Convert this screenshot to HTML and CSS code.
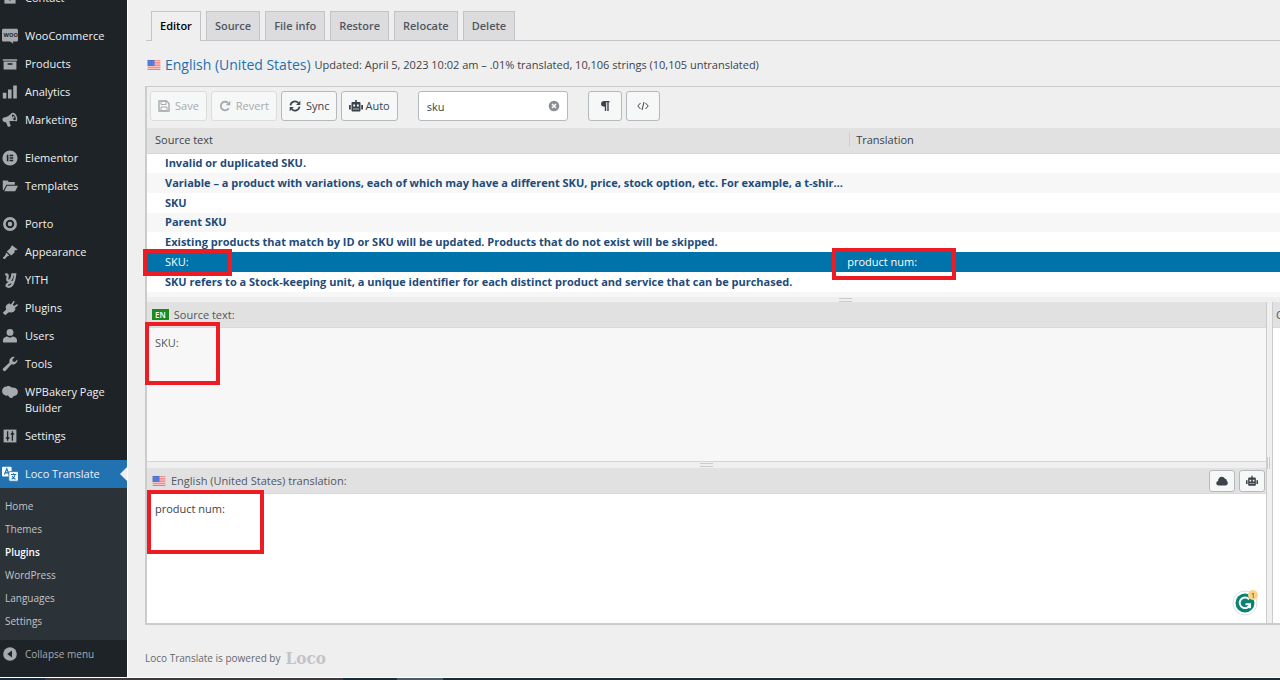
FILE: index.html
```html
<!DOCTYPE html>
<html lang="en">
  <head>
    <meta charset="UTF-8" />
    <meta name="viewport" content="width=device-width, initial-scale=1.0" />
    <title>Loco Translate - Editor</title>
    <link rel="stylesheet" href="styles.css">
  </head>
  <body>
    <svg class="sprite" aria-hidden="true">
      <symbol id="flag-us" viewBox="0 0 14 11">
        <rect width="14" height="11" fill="#f6dcdc" />
        <path d="M0 .8h14M0 3.2h14M0 5.6h14M0 8h14M0 10.3h14" stroke="#ee7a74" stroke-width="1.2" />
        <rect width="7.5" height="6.4" fill="#3f6fd0" />
        <path d="M1 2h6M1 4.4h6" stroke="#b9cdf5" stroke-width=".7" stroke-dasharray="1 .8" />
      </symbol>
      <symbol id="robot" viewBox="0 0 14 12">
        <path d="M6.2 0h1.6v2h2.4c.8 0 1.3.5 1.3 1.3v7c0 .8-.5 1.3-1.3 1.3H3.8c-.8 0-1.3-.5-1.3-1.3v-7C2.5 2.5 3 2 3.8 2h2.400zM0 5h1.800v4.500H0zM12.200 5H14v4.500h-1.800z" />
        <path d="M4.200 4.600h1.900v1.900H4.200zM7.900 4.600h1.900v1.900H7.900zM4.200 8.600h1.400v1H4.200zM6.300 8.600h1.400v1H6.300zM8.400 8.600h1.400v1H8.400z" fill="#f6f7f7" />
      </symbol>
    </svg>

    <div class="layout">
      <nav class="admin-menu">
        <ul class="menu">
          <li><a href="#"><svg viewBox="0 0 20 20"><path d="M3 6h14v11H3z" /><path d="M9 8h2v5H9z" fill="#1d2327" /></svg>Contact</a></li>
          <li class="group"><a href="#"><svg viewBox="0 0 20 20"><path d="M2 1h16c1.200 0 2 .8 2 2v12c0 1.200-.8 2-2 2h-4.500l.8 2.800L10 17H2c-1.200 0-2-.8-2-2V3c0-1.200.8-2 2-2z" /><text class="woo" x="2" y="11.500">WOO</text></svg>WooCommerce</a></li>
          <li><a href="#"><svg viewBox="0 0 20 20"><path d="M1 4h18v2H1zM2 7h16v10H2z" /><path d="M7 9h6v2H7z" fill="#1d2327" /></svg>Products</a></li>
          <li><a href="#"><svg viewBox="0 0 20 20"><path d="M1 11h4.500v7H1zM7.500 7H12v11H7.500zM14 2h4.500v16H14z" /></svg>Analytics</a></li>
          <li><a href="#"><svg viewBox="0 0 20 20"><path d="M.5 9.500c0-1.300.8-2.200 2-2.500 4-1 7-3 9.500-5.500 2-1.300 4.500 0 6 3s1.500 6.500 0 7.500c-3-.8-6-.8-9-.1l2 5.600-3.500 1.300L5 12.700c-2.500.5-4.500-1.200-4.500-3.200z" /><path d="M13 3.200c1-.5 2.700.9 3.600 2.800s.9 3.800-.1 4.200-2.500-.9-3.300-2.800-1.200-3.800-.2-4.200z" fill="#1d2327" /><circle cx="14.300" cy="6.800" r="1.400" /></svg>Marketing</a></li>
          <li class="group"><a href="#"><svg viewBox="0 0 20 20"><circle cx="10" cy="10" r="9.500" /><path d="M6 6h2v8H6zM9.500 6H14v1.700H9.500zM9.500 9.200H14v1.700H9.500zM9.500 12.300H14V14H9.500z" fill="#1d2327" /></svg>Elementor</a></li>
          <li><a href="#"><svg viewBox="0 0 20 20"><path d="M1 3h6l1.500 2H16v3.500H5.500L2 15H1z" /><path d="M6.200 9.700H20L16.500 16.500H2.800z" /></svg>Templates</a></li>
          <li class="group"><a href="#"><svg viewBox="0 0 20 20"><circle cx="10" cy="10" r="7" fill="none" stroke="#a7aaad" stroke-width="3.400" /><circle cx="10" cy="10" r="2.800" /></svg>Porto</a></li>
          <li><a href="#"><svg viewBox="0 0 20 20"><path d="M12.500 1.500l7 5.500-1.500.8-2-.3-.5 3.500-4 3.500L6 9.500l4-4z" /><path d="M5.200 10.500l4 4-1.400.6c-1.500.5-2.500 1.400-3.800 3.400-1.200 1.200-3.500-.8-2.300-2.200C4 15 4.500 13 5.200 10.500z" /></svg>Appearance</a></li>
          <li><a href="#"><svg viewBox="0 0 20 20"><path d="M4 3.500c2.500-1.500 3.500 0 3 2.500-.8 4-.5 5 1.200 5 2.500 0 4.300-4 4.800-8h3.500c-.8 7-2.500 15.500-8 15.500-4.500 0-4.500-4 5.500-6.500" fill="none" stroke="#a7aaad" stroke-width="2.800" /></svg>YITH</a></li>
          <li><a href="#"><svg viewBox="0 0 20 20"><path d="M13 3l1.500-2 1.500 1-2.500 4 1.500 1.500 4-2.500 1 1.500-4 3.500 1 1.500-2 3c-2 1.500-4.500 1.500-6 .5L4 19l-3-3 4.500-4.500C4 9.500 4.500 7.500 6 6l3-2 2 1.500z" /></svg>Plugins</a></li>
          <li><a href="#"><svg viewBox="0 0 20 20"><circle cx="10" cy="5.500" r="4.300" /><path d="M1.500 18c-1-4 .5-7 5-7.500l3.500 1.800 3.500-1.800c4.500.5 6 3.500 5 7.500z" /></svg>Users</a></li>
          <li><a href="#"><svg viewBox="0 0 20 20"><path d="M17.500 9c-1.500 1.600-3.900 2-5.700 1.300l-7.300 8.200c-1.700 1.600-4.700-.9-3.200-3l8.200-7.300C8.800 6.300 9.300 4 11 2.500c1.500-1.500 3.500-1.800 5-1.200L13 4.500l.5 2.300 2.500.7 3.300-3.200c.4 1.500-.3 3.300-1.800 4.700z" /></svg>Tools</a></li>
          <li><a href="#"><svg viewBox="0 0 20 20"><path d="M6 3c2.500-1 4.500 0 6 1.500 3-.8 5.500.5 7 2.500 1.500 2.500 1 6-2 7.500-1.500.8-2.500.6-3 1.500-.8 1.500-3 2-4.500 1-.8-.6-1-2-2-2.500C4 15 1.500 13.500.5 11-.8 7 1.500 3 6 3z" /></svg>WPBakery Page Builder</a></li>
          <li><a href="#"><svg viewBox="0 0 20 20"><path d="M2 2h16v16H2z" /><path d="M7 4v12M13 4v12M4.800 12.500h4.500M10.800 7.500h4.500" stroke="#1d2327" stroke-width="1.700" /></svg>Settings</a></li>
          <li class="group current"><a href="#"><svg viewBox="0 0 20 20"><rect x="0" y="1" width="12" height="12" rx="1.500" /><path d="M3 10.500L6 3.500l3 7M4 8.500h4" fill="none" stroke="#2271b1" stroke-width="1.500" /><rect x="8.500" y="7" width="12" height="12" rx="1.500" stroke="#2271b1" /><path d="M11 10.500h7M14.500 9v1.500M12 16.500c2-1 4-3 4.300-5.500M12.500 12.500c1 2 2.500 3.500 4.500 4" fill="none" stroke="#2271b1" stroke-width="1.300" /></svg>Loco Translate</a></li>
        </ul>
        <ul class="submenu">
          <li><a href="#">Home</a></li>
          <li><a href="#">Themes</a></li>
          <li><a href="#" class="active">Plugins</a></li>
          <li><a href="#">WordPress</a></li>
          <li><a href="#">Languages</a></li>
          <li><a href="#">Settings</a></li>
        </ul>
        <button type="button" class="collapse"><svg viewBox="0 0 20 20"><circle cx="10" cy="10" r="8.500" /><path d="M12.500 5.500v9L6.500 10z" fill="#1d2327" /></svg>Collapse menu</button>
      </nav>

      <main class="content">
        <nav class="tabs">
          <a href="#" class="tab active">Editor</a>
          <a href="#" class="tab">Source</a>
          <a href="#" class="tab">File info</a>
          <a href="#" class="tab">Restore</a>
          <a href="#" class="tab">Relocate</a>
          <a href="#" class="tab">Delete</a>
        </nav>

        <div class="file-info">
          <svg class="flag"><use href="#flag-us" /></svg>
          <h1><a href="#">English (United States)</a></h1>
          <span>Updated: April 5, 2023 10:02 am – .01% translated, 10,106 strings (10,105 untranslated)</span>
        </div>

        <div class="editor">
          <form class="toolbar">
            <button type="button" class="btn" disabled>
              <svg viewBox="0 0 12 12"><path d="M1 1h7.500L11 3.500V11H1z" fill="none" stroke="currentColor" stroke-width="1.400" /><path d="M3 1h5v3.500H3zM3 7h6v4H3z" fill="none" stroke="currentColor" /></svg>Save
            </button>
            <button type="button" class="btn" disabled>
              <svg viewBox="0 0 12 12"><path d="M9.800 8.200A4.300 4.300 0 1 1 9 2.900" fill="none" stroke="currentColor" stroke-width="1.800" /><path d="M11.300.7v4.600H6.700z" /></svg>Revert
            </button>
            <button type="button" class="btn">
              <svg viewBox="0 0 12 12"><path d="M1.500 5.300A4.500 4.500 0 0 1 9.300 2.900M10.500 6.700A4.500 4.500 0 0 1 2.700 9.100" fill="none" stroke="currentColor" stroke-width="1.700" /><path d="M11.300.8v4.200H7.100zM.7 11.200V7h4.200z" /></svg>Sync
            </button>
            <button type="button" class="btn btn-auto"><svg class="robot"><use href="#robot" /></svg>Auto</button>
            <div class="search">
              <input type="text" aria-label="Filter translations" value="sku">
              <button type="button" class="clear" aria-label="Clear">
                <svg viewBox="0 0 12 12"><circle cx="6" cy="6" r="5.300" /><path d="M4 4l4 4M8 4L4 8" stroke="#fff" stroke-width="1.500" /></svg>
              </button>
            </div>
            <button type="button" class="btn btn-icon" aria-label="Toggle invisibles">
              <svg viewBox="0 0 12 12"><path d="M5 1h5.500v1.200H9.700V11H8.300V2.200H7.200V11H5.800V6.800C3.500 6.800 2 5.700 2 4s1.300-3 3-3z" /></svg>
            </button>
            <button type="button" class="btn btn-icon" aria-label="Toggle code view">
              <svg viewBox="0 0 12 12"><path d="M3.500 3L.8 6l2.700 3M8.500 3l2.700 3-2.700 3M7 2L5 10" fill="none" stroke="currentColor" /></svg>
            </button>
          </form>

          <table class="strings">
            <thead>
              <tr><th>Source text</th><th><span>Translation</span></th></tr>
            </thead>
            <tbody>
              <tr><td>Invalid or duplicated SKU.</td><td></td></tr>
              <tr><td>Variable – a product with variations, each of which may have a different SKU, price, stock option, etc. For example, a t-shir…</td><td></td></tr>
              <tr><td>SKU</td><td></td></tr>
              <tr><td>Parent SKU</td><td></td></tr>
              <tr><td>Existing products that match by ID or SKU will be updated. Products that do not exist will be skipped.</td><td></td></tr>
              <tr class="selected"><td>SKU:</td><td>product num:</td></tr>
              <tr><td>SKU refers to a Stock-keeping unit, a unique identifier for each distinct product and service that can be purchased.</td><td></td></tr>
            </tbody>
          </table>
          <div class="splitter splitter-list"><i class="grip"></i></div>

          <div class="panes">
            <div class="pane">
              <div class="pane-head"><span class="lang">EN</span>Source text:</div>
              <div class="source-text">SKU:</div>
              <div class="splitter"><i class="grip"></i></div>
              <div class="pane-head">
                <svg class="flag"><use href="#flag-us" /></svg>
                <label for="translation">English (United States) translation:</label>
                <div class="pane-tools">
                  <button type="button" class="btn btn-small" aria-label="Cloud suggestions">
                    <svg viewBox="0 0 12 10"><path d="M3 9.500C1.300 9.500.3 8.500.3 7.200c0-1.200.8-2 1.800-2.200C2 2.500 3.700.8 5.800.8c1.500 0 2.600.8 3.100 2 1.300 0 2 1 1.900 2.200.6.400 1 1.200 1 2 0 1.500-1 2.500-2.500 2.500z" /></svg>
                  </button>
                  <button type="button" class="btn btn-small" aria-label="Auto translate"><svg><use href="#robot" /></svg></button>
                </div>
              </div>
              <textarea id="translation" class="translation">product num:</textarea>
              <div class="grammar">
                <svg viewBox="0 0 26 26"><circle cx="13" cy="13" r="12" fill="#fff" stroke="#dcdfe6" /><circle cx="13" cy="13" r="9.500" fill="#0b8372" /><path d="M17 9.300A5.300 5.300 0 1 0 18.200 14M13.500 14.200h4.500v4" fill="none" stroke="#fff" stroke-width="1.900" /></svg>
                <span class="count">1</span>
              </div>
            </div>
            <div class="splitter-side"><i class="grip"></i></div>
            <div class="pane pane-comments">
              <div class="pane-head">Comments:</div>
            </div>
          </div>

          <i class="mark mark-source"></i>
          <i class="mark mark-target"></i>
          <i class="mark mark-source-text"></i>
          <i class="mark mark-translation"></i>
        </div>

        <footer class="credit">Loco Translate is powered by <a href="#">Loco</a></footer>
      </main>
    </div>
    <div class="taskbar"><i class="task-open"></i><i class="task-active"></i></div>
  </body>
</html>
```
FILE: styles.css
```css
* {
  box-sizing: border-box;
}

body {
  margin: 0;
  min-height: 100vh;
  display: flex;
  flex-direction: column;
  overflow: hidden;
  background: #efefef;
  color: #3c434a;
  font-family: "Open Sans", "Noto Sans", sans-serif;
  font-size: 11px;
  line-height: 16px;
}

a {
  color: inherit;
  text-decoration: none;
}

ul {
  list-style: none;
  margin: 0;
  padding: 0;
}

svg {
  fill: currentColor;
  flex: none;
}

button,
input,
textarea {
  font: inherit;
  color: inherit;
}

.sprite {
  position: absolute;
  width: 0;
  height: 0;
}

.layout {
  flex: 1;
  display: flex;
  overflow: hidden;
}

/* Admin menu */
.admin-menu {
  width: 128px;
  flex: none;
  margin-top: -16px;
  background: #1d2327;
  color: #f0f0f1;
  border-right: 1px solid #fff;
}

.menu a {
  display: flex;
  gap: 7px;
  padding: 6px 10px 6px 2px;
}

.menu svg,
.collapse svg {
  width: 16px;
  height: 16px;
  color: #a7aaad;
}

.menu .group {
  margin-top: 10px;
}

.woo {
  font-size: 7px;
  font-weight: 700;
  fill: #1d2327;
}

.current {
  position: relative;
  background: #2271b1;
}

.menu .current svg {
  color: #fff;
}

.current::after {
  content: "";
  position: absolute;
  right: 0;
  top: 7px;
  border: 7px solid transparent;
  border-right-color: #efefef;
  border-left-width: 0;
}

.submenu {
  padding: 7px 5px;
  background: #2c3338;
  color: #c3c4c7;
  font-size: 10px;
  line-height: 23px;
}

.submenu a {
  display: block;
}

.submenu .active {
  color: #fff;
  font-weight: 600;
}

.collapse {
  display: flex;
  align-items: center;
  gap: 7px;
  padding: 6px 2px;
  border: 0;
  background: none;
  color: #a7aaad;
  font-size: 10px;
}

/* Content */
.content {
  flex: 1;
  min-width: 0;
  padding: 11px 0 0 17px;
}

.tabs {
  display: flex;
  gap: 5px;
  margin-left: 1px;
  padding-left: 5px;
  border-bottom: 1px solid #c3c4c7;
}

.tab {
  padding: 6px 8px;
  border: 1px solid #c3c4c7;
  border-bottom: 0;
  background: #dcdcde;
  color: #50575e;
  font-weight: 600;
}

.tab.active {
  margin-bottom: -1px;
  padding-bottom: 7px;
  background: #efefef;
  color: #000;
}

.file-info {
  display: flex;
  align-items: center;
  gap: 4px;
  padding: 15px 2px 13px;
  line-height: 17px;
}

.flag {
  width: 14px;
  height: 10px;
}

h1 {
  margin: 0;
  color: #2271b1;
  font-size: 14px;
  font-weight: 400;
}

.editor {
  position: relative;
  border: 1px solid #ccc;
  border-width: 1px 0 2px 2px;
}

/* Toolbar */
.toolbar {
  display: flex;
  gap: 4px;
  padding: 4px 4px 7px 3px;
}

.btn {
  display: inline-flex;
  align-items: center;
  justify-content: center;
  gap: 5px;
  height: 30px;
  padding: 0 7px;
  border: 1px solid #b4b9be;
  border-radius: 3px;
  background: #f6f7f7;
  color: #3c434a;
}

.btn svg {
  width: 12px;
  height: 12px;
}

.btn:disabled {
  border-color: #dcdcde;
  color: #a7aaad;
}

.btn-auto {
  gap: 2px;
}

.btn .robot {
  width: 14px;
}

.btn-icon {
  width: 34px;
  padding: 0;
}

.search {
  position: relative;
  width: 150px;
  margin: 0 16px;
}

.search input {
  width: 100%;
  height: 30px;
  padding: 0 26px 0 8px;
  border: 1px solid #b4b9be;
  border-radius: 3px;
  background: #fff;
}

.clear {
  position: absolute;
  top: 9px;
  right: 8px;
  display: flex;
  padding: 0;
  border: 0;
  background: none;
  color: #8c8f94;
}

.clear svg {
  width: 12px;
  height: 12px;
}

/* String list */
.strings {
  width: 100%;
  height: 164px;
  table-layout: fixed;
  border-collapse: collapse;
  background: #fff;
}

.strings th {
  height: 25px;
  padding: 0 8px;
  border-bottom: 1px solid #d5d5d5;
  background: #e1e1e1;
  font-weight: 400;
  text-align: left;
}

.strings th:first-child {
  width: 61.8%;
}

.strings th + th {
  padding-left: 2px;
}

.strings th span {
  padding-left: 6px;
  border-left: 1px solid #cfcfcf;
}

.strings td {
  height: 19px;
  padding: 0 0 0 18px;
  color: #1d4b7a;
  font-weight: 700;
  overflow: hidden;
  text-overflow: ellipsis;
  white-space: nowrap;
}

.strings td + td {
  padding-left: 0;
}

.strings tbody tr:nth-child(even) {
  background: #f7f7f7;
}

.strings tbody tr.selected {
  background: #0073aa;
}

.strings .selected td {
  color: #fff;
  font-weight: 400;
}

/* Panes */
.splitter {
  display: flex;
  justify-content: center;
  align-items: center;
  height: 6px;
  background: #efefef;
}

.splitter-list {
  height: 10px;
  padding-left: 264px;
  border-top: 5px solid #f7f7f7;
}

.grip {
  width: 13px;
  height: 4px;
  border: 1px solid #ccc;
  border-width: 1px 0;
}

.panes {
  display: flex;
}

.pane {
  position: relative;
  flex: 1;
  min-width: 0;
  border-right: 1px solid #ccc;
}

.pane-comments {
  flex: 0 0 8px;
  border: 0;
  border-left: 1px solid #ccc;
  background: #fff;
  overflow: hidden;
}

.splitter-side {
  display: flex;
  align-items: center;
  width: 5px;
}

.splitter-side .grip {
  width: 3px;
  height: 12px;
  border-width: 0 1px;
}

.pane-head {
  display: flex;
  align-items: center;
  gap: 5px;
  height: 26px;
  padding: 0 1px 0 5px;
  border-bottom: 1px solid #d9d9d9;
  background: #e1e1e1;
  color: #50575e;
  white-space: nowrap;
}

.pane-comments .pane-head {
  padding-left: 3px;
}

.lang {
  padding: 0 3px;
  background: #1f8a24;
  color: #fff;
  font-size: 8px;
  font-weight: 600;
  line-height: 11px;
}

.pane-tools {
  display: flex;
  gap: 4px;
  margin-left: auto;
}

.btn-small {
  width: 26px;
  height: 22px;
  padding: 0;
}

.source-text {
  min-height: 134px;
  padding: 7px 8px;
  border-bottom: 1px solid #d5d5d5;
  background: #f7f7f7;
  color: #50575e;
}

.translation {
  display: block;
  width: 100%;
  height: 129px;
  padding: 7px 8px;
  border: 0;
  outline: 0;
  background: #fff;
  resize: none;
}

.grammar {
  position: absolute;
  right: 8px;
  bottom: 7px;
}

.grammar svg {
  display: block;
  width: 26px;
  height: 26px;
}

.count {
  position: absolute;
  top: 0;
  right: 0;
  width: 10px;
  border-radius: 5px;
  background: #fbd38a;
  color: #6b4a12;
  font-size: 8px;
  line-height: 10px;
  text-align: center;
}

/* Highlight boxes */
.mark {
  position: absolute;
  border: 4px solid #ed1c24;
  pointer-events: none;
}

.mark-source {
  left: -4px;
  top: 162px;
  width: 89px;
  height: 27px;
}

.mark-target {
  left: 685px;
  top: 161px;
  width: 124px;
  height: 32px;
}

.mark-source-text {
  left: -2px;
  top: 235px;
  width: 75px;
  height: 63px;
}

.mark-translation {
  left: 0;
  top: 403px;
  width: 117px;
  height: 64px;
}

/* Footer */
.credit {
  display: flex;
  align-items: center;
  gap: 5px;
  padding-top: 21px;
  color: #646970;
  font-size: 10px;
}

.credit a {
  color: #c3c4c7;
  font-family: "DejaVu Serif Condensed", "DejaVu Serif", serif;
  font-size: 17px;
  font-weight: 700;
  line-height: 24px;
}

.taskbar {
  display: flex;
  gap: 54px;
  height: 3px;
  padding-left: 45px;
  border-top: 1px solid #fff;
  background: #1a2c3a;
}

.task-open {
  width: 298px;
  background: #3f3b3c;
}

.task-active {
  width: 46px;
  background: #4b5a68;
}
```
